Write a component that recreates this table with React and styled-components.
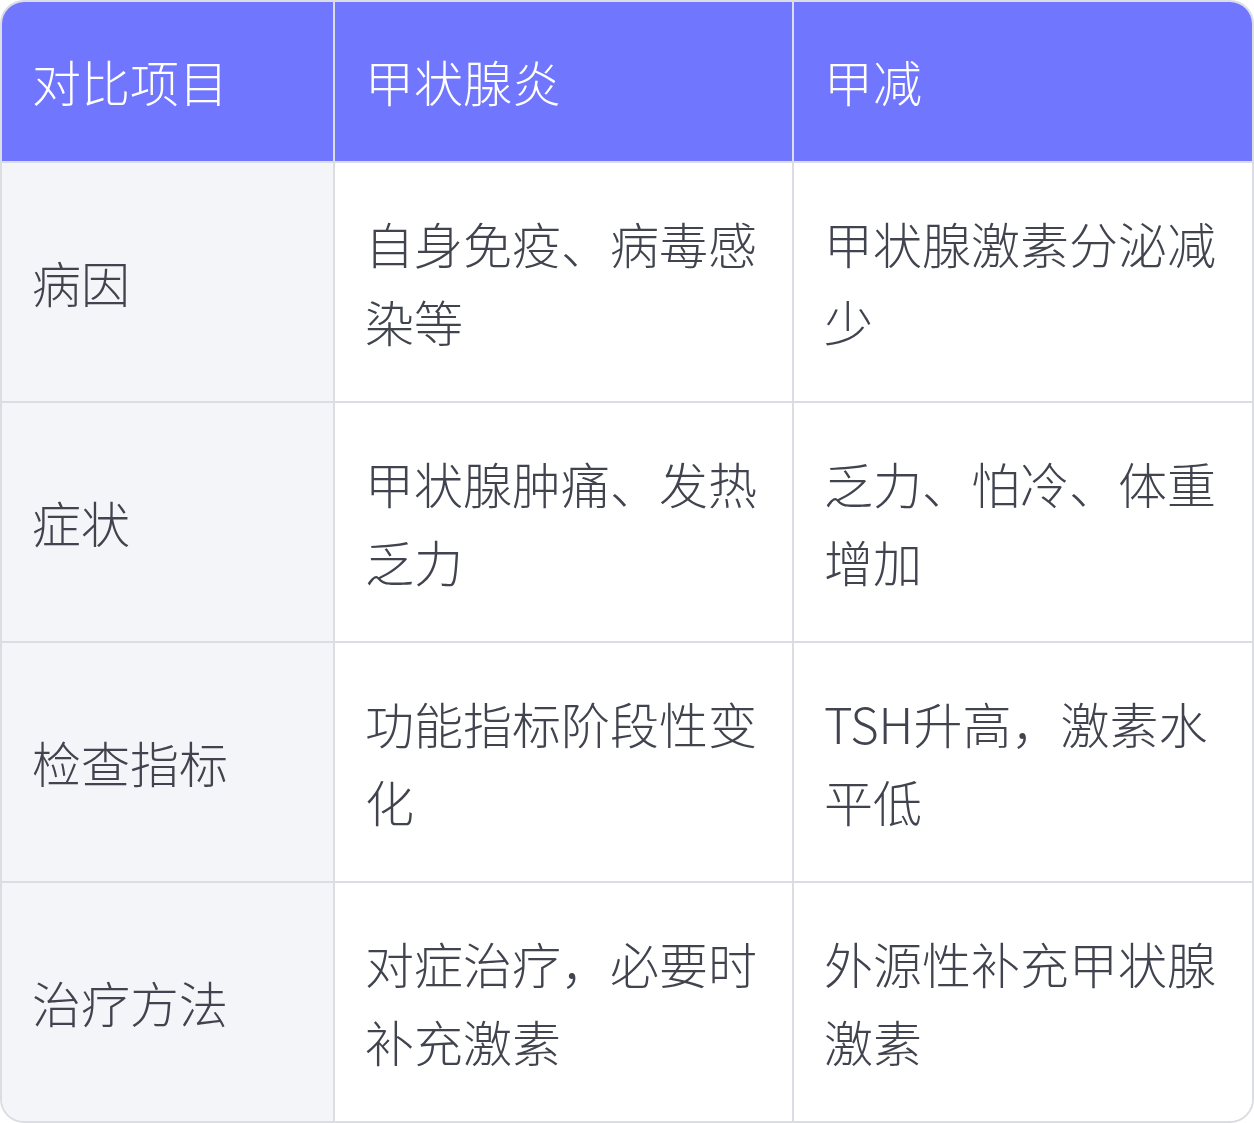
import React from 'react';
import styled, { createGlobalStyle } from 'styled-components';

const GlobalStyle = createGlobalStyle`
  html, body {
    margin: 0;
    padding: 0;
    background: #ffffff;
  }
  body {
    font-family: "Noto Sans CJK SC", "Noto Sans", sans-serif;
  }
`;

const Wrap = styled.div`
  width: 1254px;
  box-sizing: border-box;
  border: 2px solid #dcdde3;
  border-radius: 24px;
  overflow: hidden;
  background: #ffffff;
`;

const Table = styled.table`
  width: 100%;
  border-collapse: separate;
  border-spacing: 0;
  table-layout: fixed;
`;

const Th = styled.th`
  background: #7176ff;
  color: #ffffff;
  font-weight: 200;
  font-size: 49px;
  line-height: 78px;
  text-align: left;
  padding: 40px 30px 41px;
  border-bottom: 2px solid #dcdde3;
  border-right: ${p => (p.$last ? 'none' : '2px solid #dcdde3')};
  vertical-align: middle;
`;

const Td = styled.td`
  background: ${p => (p.$label ? '#f4f5f9' : '#ffffff')};
  color: #41444f;
  font-weight: 200;
  font-size: 49px;
  line-height: 78px;
  padding: 41px 30px;
  text-align: left;
  vertical-align: middle;
  border-bottom: ${p => (p.$bottom ? 'none' : '2px solid #dcdde3')};
  border-right: ${p => (p.$last ? 'none' : '2px solid #dcdde3')};
  word-break: break-all;
`;

const rows = [
  ['病因', '自身免疫、病毒感染等', '甲状腺激素分泌减少'],
  ['症状', '甲状腺肿痛、发热乏力', '乏力、怕冷、体重增加'],
  ['检查指标', '功能指标阶段性变化', 'TSH升高，激素水平低'],
  ['治疗方法', '对症治疗，必要时补充激素', '外源性补充甲状腺激素'],
];

export default function App() {
  return (
    <>
      <GlobalStyle />
      <Wrap>
        <Table>
          <colgroup>
            <col style={{ width: 333 }} />
            <col style={{ width: 459 }} />
            <col style={{ width: 458 }} />
          </colgroup>
          <thead>
            <tr>
              <Th>对比项目</Th>
              <Th>甲状腺炎</Th>
              <Th $last>甲减</Th>
            </tr>
          </thead>
          <tbody>
            {rows.map((r, i) => {
              const bottom = i === rows.length - 1;
              return (
                <tr key={i}>
                  <Td $label $bottom={bottom}>{r[0]}</Td>
                  <Td $bottom={bottom}>{r[1]}</Td>
                  <Td $bottom={bottom} $last>{r[2]}</Td>
                </tr>
              );
            })}
          </tbody>
        </Table>
      </Wrap>
    </>
  );
}
